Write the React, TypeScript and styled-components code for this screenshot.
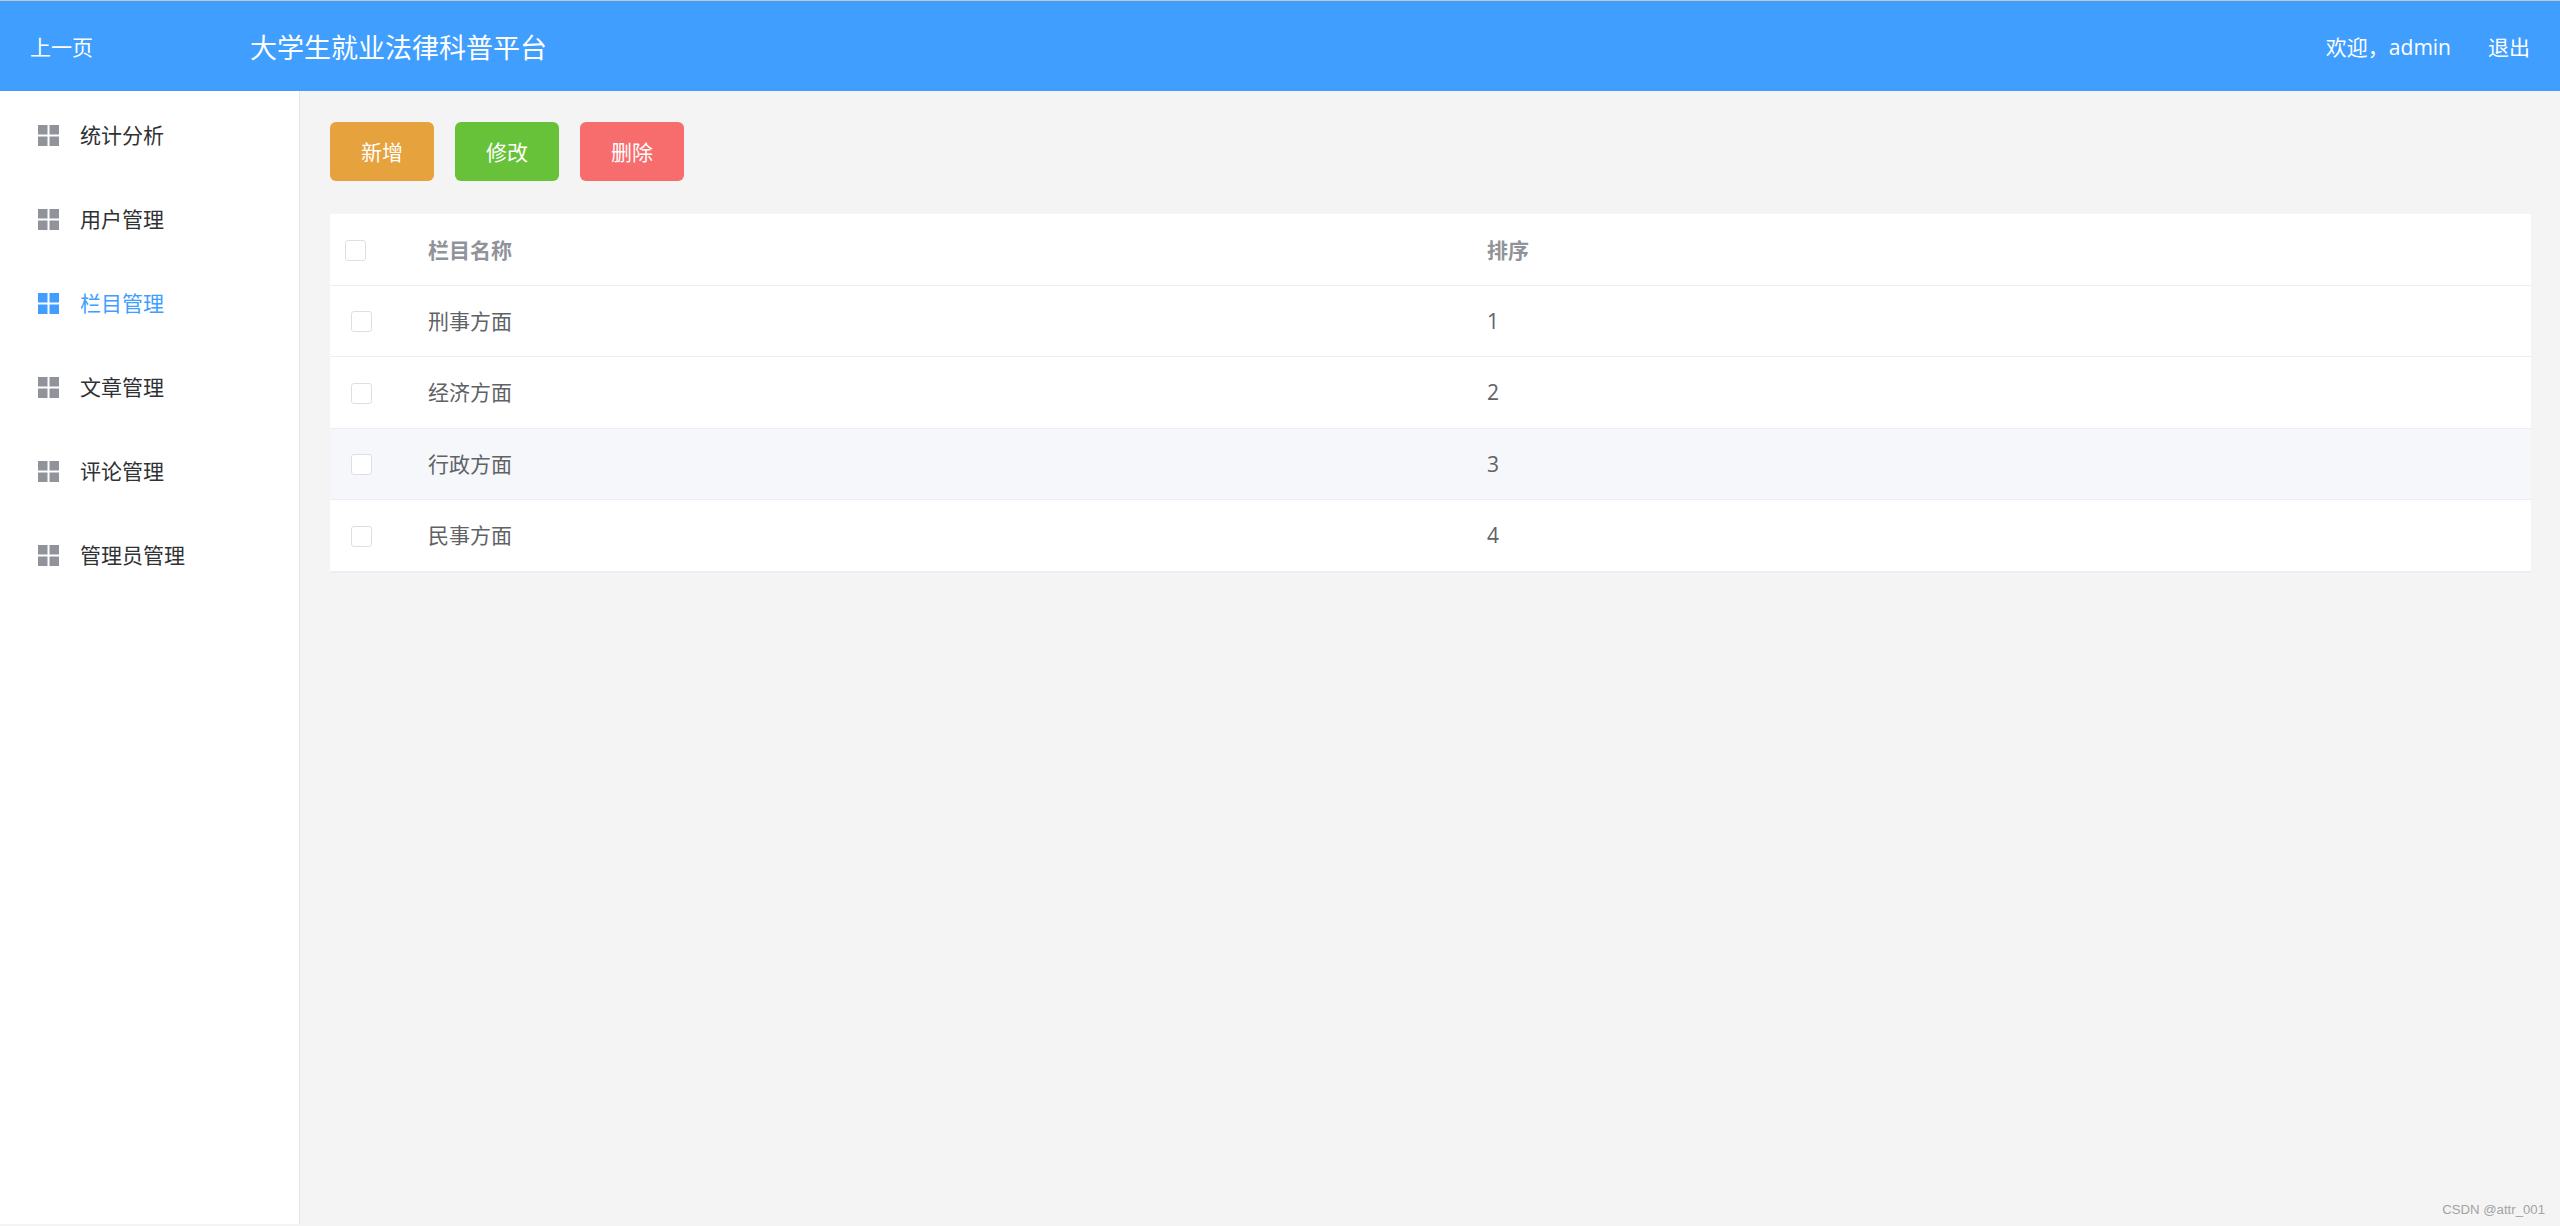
import React from 'react';
import styled, { createGlobalStyle } from 'styled-components';

const GlobalStyle = createGlobalStyle`
  html, body {
    margin: 0;
    padding: 0;
    height: 100%;
    background: #f4f4f4;
  }
  body {
    font-family: "Open Sans", "Noto Sans CJK SC", sans-serif;
    font-size: 21px;
    overflow: hidden;
  }
  #root {
    height: 100%;
  }
`;

const menuItems = ['统计分析', '用户管理', '栏目管理', '文章管理', '评论管理', '管理员管理'];

const rows = [
  { name: '刑事方面', sort: 1 },
  { name: '经济方面', sort: 2 },
  { name: '行政方面', sort: 3, hover: true },
  { name: '民事方面', sort: 4 },
];

const MenuIcon = () => (
  <svg width="21" height="21" viewBox="0 0 21 21" fill="currentColor">
    <rect x="0" y="0" width="9.5" height="9.5" />
    <rect x="11.5" y="0" width="9.5" height="9.5" />
    <rect x="0" y="11.5" width="9.5" height="9.5" />
    <rect x="11.5" y="11.5" width="9.5" height="9.5" />
  </svg>
);

const App: React.FC = () => {
  return (
    <Page>
      <GlobalStyle />
      <Header>
        <BackLink>上一页</BackLink>
        <Title>大学生就业法律科普平台</Title>
        <UserArea>
          <span>欢迎，admin</span>
          <span>退出</span>
        </UserArea>
      </Header>
      <Body>
        <Sidebar>
          {menuItems.map((item) => (
            <MenuItem key={item} active={item === '栏目管理'}>
              <IconWrap active={item === '栏目管理'}><MenuIcon /></IconWrap>
              <MenuLabel>{item}</MenuLabel>
            </MenuItem>
          ))}
        </Sidebar>
        <Main>
          <Toolbar>
            <ActionButton colour="#e6a23c">新增</ActionButton>
            <ActionButton colour="#67c23a">修改</ActionButton>
            <ActionButton colour="#f76c6c">删除</ActionButton>
          </Toolbar>
          <Table>
            <Row>
              <CheckCell head><Checkbox /></CheckCell>
              <HeadCell>栏目名称</HeadCell>
              <HeadCell>排序</HeadCell>
            </Row>
            {rows.map((row) => (
              <Row key={row.name} hover={row.hover}>
                <CheckCell><Checkbox /></CheckCell>
                <NameCell>{row.name}</NameCell>
                <Cell>{row.sort}</Cell>
              </Row>
            ))}
          </Table>
        </Main>
      </Body>
      <Watermark>CSDN @attr_001</Watermark>
    </Page>
  );
};

const Page = styled.div`
  display: flex;
  flex-direction: column;
  height: 100%;
  border-top: 1px solid #c4c7cc;
  box-sizing: border-box;
`;

const Header = styled.header`
  display: flex;
  align-items: center;
  flex: 0 0 90px;
  padding: 0 30px;
  background: #409eff;
  color: #fff;
`;

const BackLink = styled.div`
  width: 220px;
`;

const Title = styled.h1`
  margin: 0;
  font-size: 27px;
  font-weight: 400;
`;

const UserArea = styled.div`
  display: flex;
  gap: 37px;
  margin-left: auto;
`;

const Body = styled.div`
  display: flex;
  flex: 1;
  min-height: 0;
`;

const Sidebar = styled.nav`
  flex: 0 0 299px;
  margin-bottom: 2px;
  padding-top: 2.5px;
  background: #fff;
  border-right: 1px solid #e6e6e6;
`;

const MenuItem = styled.div<{ active?: boolean }>`
  display: flex;
  align-items: center;
  height: 84px;
  padding-left: 38px;
  color: ${({ active }) => (active ? '#409eff' : '#303133')};
`;

const IconWrap = styled.span<{ active?: boolean }>`
  display: flex;
  margin-right: 21px;
  color: ${({ active }) => (active ? '#409eff' : '#909399')};
`;

const MenuLabel = styled.span`
  padding-bottom: 4px;
`;

const Main = styled.main`
  flex: 1;
  padding: 31px 29px 0 30px;
`;

const Toolbar = styled.div`
  display: flex;
  gap: 21px;
  margin-bottom: 33px;
`;

const ActionButton = styled.button<{ colour: string }>`
  width: 104px;
  height: 59px;
  padding: 0 0 2px;
  border: none;
  border-radius: 6px;
  background: ${({ colour }) => colour};
  color: #fff;
  font-family: inherit;
  font-size: 21px;
`;

const Table = styled.div`
  background: #fff;
  border-bottom: 1px solid #ebeef5;
`;

const Row = styled.div<{ hover?: boolean }>`
  display: grid;
  grid-template-columns: 98px 1059px 1fr;
  align-items: center;
  box-sizing: border-box;
  height: 71.5px;
  border-bottom: 1px solid #ebeef5;
  background: ${({ hover }) => (hover ? '#f5f7fa' : '#fff')};
`;

const CheckCell = styled.div<{ head?: boolean }>`
  display: flex;
  padding-top: 2px;
  padding-left: ${({ head }) => (head ? '15px' : '21px')};
`;

const Checkbox = styled.span`
  box-sizing: border-box;
  width: 21px;
  height: 21px;
  border: 1px solid #dcdfe6;
  border-radius: 3px;
  background: #fff;
`;

const HeadCell = styled.div`
  padding-bottom: 1px;
  color: #909399;
  font-weight: 700;
`;

const Cell = styled.div`
  color: #606266;
`;

const NameCell = styled(Cell)`
  padding-bottom: 2px;
`;

const Watermark = styled.div`
  position: absolute;
  right: 15px;
  bottom: 9px;
  color: #a3a3a3;
  font-family: "Liberation Sans", sans-serif;
  font-size: 13.2px;
`;

export default App;
